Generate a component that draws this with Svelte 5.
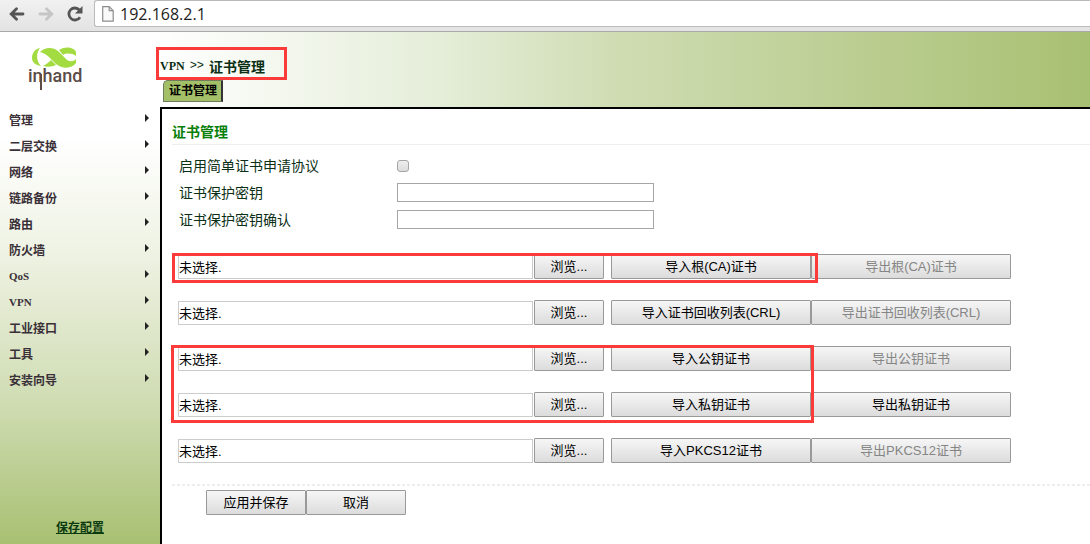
<script>
	const menu = [
		'管理',
		'二层交换',
		'网络',
		'链路备份',
		'路由',
		'防火墙',
		'QoS',
		'VPN',
		'工业接口',
		'工具',
		'安装向导'
	];

	// rows that share a group are outlined together
	const groups = [
		{ mark: 'single', rows: [{ name: '根(CA)证书', canExport: false }] },
		{ mark: '', rows: [{ name: '证书回收列表(CRL)', canExport: false }] },
		{
			mark: 'double',
			rows: [
				{ name: '公钥证书', canExport: false },
				{ name: '私钥证书', canExport: true }
			]
		},
		{ mark: '', rows: [{ name: 'PKCS12证书', canExport: false }] }
	];

	let address = $state('192.168.2.1');
	let scep = $state(false);
	let key = $state('');
	let confirmKey = $state('');

	const reset = () => {
		scep = false;
		key = '';
		confirmKey = '';
	};
</script>

<div class="page">
	<div class="toolbar">
		<button class="tool" aria-label="后退">
			<svg width="16" height="14" viewBox="0 0 16 14">
				<path
					d="M14 7H2.500M7.500 1.800L2.200 7l5.300 5.200"
					fill="none"
					stroke="#555"
					stroke-width="2.800"
					stroke-linecap="round"
				/>
			</svg>
		</button>
		<button class="tool" aria-label="前进">
			<svg width="16" height="14" viewBox="0 0 16 14">
				<path
					d="M2 7h11.500M8.500 1.800L13.800 7l-5.300 5.200"
					fill="none"
					stroke="#c6c6c6"
					stroke-width="2.800"
					stroke-linecap="round"
				/>
			</svg>
		</button>
		<button class="tool" aria-label="刷新">
			<svg width="16" height="16" viewBox="0 0 16 16">
				<path d="M13 11.200A6 6 0 1 1 12.400 4" fill="none" stroke="#555" stroke-width="2.800" />
				<path d="M15.500 0v7.500H8z" fill="#555" />
			</svg>
		</button>
		<div class="omnibox">
			<svg width="12" height="16" viewBox="0 0 12 16">
				<path d="M.7.7h6.500l4 4v10.500H.7z" fill="#fafafa" stroke="#8c8c8c" stroke-width="1.200" />
				<path d="M7.200.7v4h4" fill="none" stroke="#8c8c8c" stroke-width="1.200" />
			</svg>
			<input type="text" aria-label="地址" bind:value={address} />
		</div>
	</div>

	<header class="header">
		<div class="brand">
			<svg class="logo" width="58" height="46" viewBox="0 0 58 46">
				<g fill="#a2dc40">
					<path d="M12 1C7 2 4 6 4 11c0 4 3 7 9 8C8 14 8 6 12 1z" />
					<path
						d="M12 5C17 0 25 0 30 4l8 8c3 3 7 3 10 0v4c-4 6-14 6-20 1l-6-6C19 8 16 6 12 5z"
					/>
					<path d="M15 19c4-2 6-4 8-6l5 5c-4 2-9 2-13 1z" />
					<path d="M31 3c6-4 15-3 17 2v4c-4-3-10-3-13-1z" />
				</g>
				<text x="0" y="35">inhand</text>
				<path d="M13 27v16" stroke="#5b4c48" stroke-width="2" />
			</svg>
		</div>
		<div class="heading">
			<div class="crumbs"><b class="latin">VPN</b><span class="sep">&gt;&gt;</span><b>证书管理</b></div>
			<a class="tab" href="#cert">证书管理</a>
		</div>
	</header>

	<div class="body">
		<nav class="sidebar">
			<ul>
				{#each menu as item}
					<li><a href="#menu" class:latin={/^[A-Za-z]+$/.test(item)}>{item}</a></li>
				{/each}
			</ul>
			<a class="save" href="#save">保存配置</a>
		</nav>

		<main id="cert">
			<h1>证书管理</h1>
			<div class="fields">
				<div class="field">
					<label for="scep">启用简单证书申请协议</label>
					<input id="scep" type="checkbox" bind:checked={scep} />
				</div>
				<div class="field">
					<label for="key">证书保护密钥</label>
					<input id="key" type="password" bind:value={key} />
				</div>
				<div class="field">
					<label for="confirm">证书保护密钥确认</label>
					<input id="confirm" type="password" bind:value={confirmKey} />
				</div>
			</div>

			<div class="imports">
				{#each groups as group}
					<div class="group {group.mark}">
						{#each group.rows as row}
							<div class="row">
								<input class="file" type="text" readonly value="未选择." aria-label={row.name} />
								<button class="browse">浏览...</button>
								<button class="action">导入{row.name}</button>
								<button class="action" disabled={!row.canExport}>导出{row.name}</button>
							</div>
						{/each}
					</div>
				{/each}
			</div>

			<div class="footer">
				<button>应用并保存</button>
				<button onclick={reset}>取消</button>
			</div>
		</main>
	</div>
</div>

<style>
	:global(body) {
		margin: 0;
	}
	.page {
		display: flex;
		flex-direction: column;
		min-height: 100vh;
		background: #fff;
		color: #000;
		font-family: 'Liberation Sans', 'Noto Sans CJK SC', sans-serif;
		font-size: 14px;
	}
	.page *,
	.page *::after {
		box-sizing: border-box;
	}
	input,
	button {
		font-family: inherit;
		font-size: 13px;
	}

	/* browser bar */
	.toolbar {
		display: flex;
		height: 32px;
		padding-left: 9px;
		background: linear-gradient(#f1f1f1, #e3e3e3);
		border-bottom: 1px solid #a9a9a9;
	}
	.tool {
		width: 17px;
		height: 27px;
		margin-right: 12px;
		padding: 0;
		border: 0;
		background: none;
	}
	.tool svg {
		display: block;
	}
	.tool:nth-child(3) {
		margin-right: 10px;
	}
	.omnibox {
		display: flex;
		flex: 1;
		align-items: center;
		height: 27px;
		padding-left: 7px;
		background: #fff;
		border: 1px solid #bababa;
		border-right: 0;
		border-radius: 3px 0 0 3px;
	}
	.omnibox input {
		flex: 1;
		min-width: 0;
		padding: 0;
		margin-left: 6px;
		border: 0;
		outline: 0;
		background: none;
		color: #222;
		font-family: 'Open Sans', sans-serif;
		font-size: 16px;
	}

	.header {
		display: flex;
		height: 75px;
		background: linear-gradient(to right, #fff 155px, #e5eed9 40%, #cfdcb2 57%, #a8c072);
	}
	.brand {
		width: 160px;
		padding: 15px 0 0 28px;
	}
	.logo text {
		fill: #5b4c48;
		font-family: Roboto, sans-serif;
		font-size: 18px;
		font-weight: 500;
	}
	.heading {
		display: flex;
		flex-direction: column;
		align-items: flex-start;
		padding-top: 23px;
	}
	.crumbs {
		position: relative;
		display: flex;
		align-items: center;
		height: 25px;
		padding-bottom: 3px;
		color: #0b2f14;
	}
	.crumbs::after {
		content: '';
		position: absolute;
		inset: -8px -22px 0 -4px;
		border: 3px solid #fb3a3a;
	}
	.latin {
		font-family: 'Liberation Serif', serif;
		font-size: 12px;
	}
	.sep {
		margin: 0 5px;
		font-family: 'Liberation Mono', monospace;
		font-size: 12px;
	}
	.tab {
		height: 22px;
		margin-left: 3px;
		padding: 0 4px 0 5px;
		background: #a3bf68;
		border: 1px solid #6f7b5a;
		border-right: 2px solid #333;
		border-top-left-radius: 5px;
		color: #000;
		font-size: 12px;
		font-weight: bold;
		line-height: 20px;
		text-decoration: none;
	}

	.body {
		display: flex;
		flex: 1;
	}
	.sidebar {
		display: flex;
		flex-direction: column;
		width: 160px;
		background: linear-gradient(#fff 30px, #eff3e4 143px, #cfdcb2 68%, #a8c072);
	}
	ul {
		margin: 0;
		padding: 0;
		list-style: none;
	}
	li {
		display: flex;
		align-items: center;
		justify-content: space-between;
		height: 26px;
		padding: 0 11px 0 9px;
	}
	li::after {
		content: '';
		margin-bottom: 4px;
		border: 4px solid transparent;
		border-left-color: #222;
		border-right: 0;
	}
	li a {
		padding-bottom: 2px;
		color: #3a3038;
		font-size: 12px;
		font-weight: bold;
		text-decoration: none;
	}
	li .latin {
		padding: 0;
		font-size: 11px;
	}
	.save {
		align-self: center;
		margin-top: auto;
		padding-bottom: 9px;
		color: #0b3a0f;
		font-size: 12px;
		font-weight: bold;
	}

	main {
		flex: 1;
		min-width: 0;
		padding: 12px 0 0 10px;
		border-top: 2px solid #000;
		border-left: 2px solid #000;
		background: #fff;
	}
	h1 {
		height: 24px;
		margin: 0;
		border-bottom: 1px solid #eee;
		color: #0a800a;
		font-size: 14px;
		line-height: 22px;
	}
	.fields {
		padding: 7px 0 0 7px;
	}
	.field {
		display: flex;
		align-items: center;
		height: 27px;
		color: #0b2f14;
	}
	.field label {
		width: 218px;
		padding-bottom: 2px;
	}
	.field input {
		width: 257px;
		height: 19px;
		margin: 0;
		border: 1px solid #a6a6a6;
	}
	.field input[type='checkbox'] {
		appearance: none;
		width: 12px;
		height: 12px;
		border-radius: 3px;
		background: linear-gradient(#eee, #dcdcdc);
	}
	.field input[type='checkbox']:checked {
		background: #666;
	}

	button {
		height: 25px;
		padding: 0;
	}
	.row button,
	.footer button {
		padding-bottom: 2px;
		border: 1px solid #999;
		border-radius: 1px;
		background: linear-gradient(#f6f6f6, #dcdcdc);
		color: #000;
	}
	.row button:disabled {
		color: #858585;
	}
	.imports {
		padding: 21px 0 0 6px;
	}
	.group {
		position: relative;
	}
	.row {
		display: flex;
		align-items: flex-end;
		height: 25px;
		margin-bottom: 21px;
	}
	.file {
		flex: 0 1 355px;
		min-width: 0;
		height: 24px;
		margin-right: 1px;
		padding: 0 0 2px;
		border: 1px solid #ccc;
	}
	.row .browse {
		width: 70px;
		margin-right: 7px;
	}
	.row .action {
		width: 200px;
	}
	/* red outline laid over the import half of a group */
	.single::after,
	.double::after {
		content: '';
		position: absolute;
		top: -1px;
		left: -6px;
		width: 646px;
		height: 30px;
		border: 3px solid #fb3a3a;
		pointer-events: none;
	}
	.double::after {
		left: -7px;
		width: 643px;
		height: 78px;
	}

	.footer {
		display: flex;
		padding: 6px 0 0 34px;
		background: repeating-linear-gradient(to right, #eee 0 3px, #fff 3px 5px) top / 100% 2px no-repeat;
	}
	.footer button {
		width: 100px;
	}
</style>
